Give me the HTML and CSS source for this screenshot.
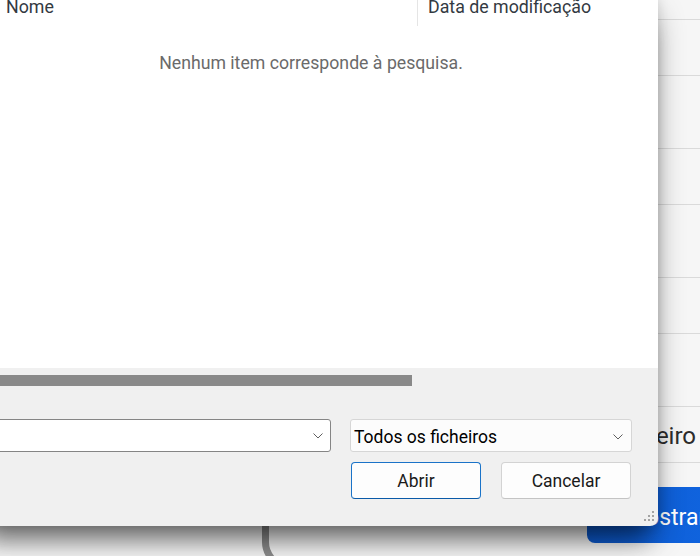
FILE: index.html
```html
<!DOCTYPE html>
<html lang="pt">
<head>
<meta charset="utf-8">
<title>Abrir</title>
<link rel="stylesheet" href="styles.css">
</head>
<body>
<div class="page">
  <div class="form">
    <div class="field"></div>
    <div class="field"></div>
    <div class="field"></div>
    <div class="field"><span class="field-text">Ficheiro</span></div>
    <button class="primary">Mostrar</button>
  </div>
  <svg class="wire" width="30" height="40" viewBox="0 0 30 40">
    <path d="M7.5 0 L7.5 22 Q7.5 32 15 40" fill="none" stroke="#8c8c8c" stroke-width="7"/>
  </svg>
</div>

<div class="dialog">
  <div class="list">
    <div class="list-header">
      <div class="col col-name">Nome</div>
      <div class="col col-date">Data de modificação</div>
    </div>
    <div class="empty">Nenhum item corresponde à pesquisa.</div>
  </div>
  <div class="footer">
    <div class="hscroll"></div>
    <div class="controls">
      <div class="combo">
        <svg class="chev" width="10" height="6" viewBox="0 0 10 6"><path d="M0.5 0.5 L5 5 L9.5 0.5" fill="none" stroke="#5f5f5f" stroke-width="1"/></svg>
      </div>
      <div class="select">
        <span>Todos os ficheiros</span>
        <svg class="chev" width="10" height="6" viewBox="0 0 10 6"><path d="M0.5 0.5 L5 5 L9.5 0.5" fill="none" stroke="#5f5f5f" stroke-width="1"/></svg>
      </div>
    </div>
    <div class="buttons">
      <button class="btn btn-default">Abrir</button>
      <button class="btn">Cancelar</button>
    </div>
  </div>
  <svg class="grip" width="12" height="12" viewBox="0 0 12 12">
    <rect x="9" y="1" width="2" height="2" fill="#a3a3a3"/>
    <rect x="5" y="5" width="2" height="2" fill="#a3a3a3"/>
    <rect x="9" y="5" width="2" height="2" fill="#a3a3a3"/>
    <rect x="1" y="9" width="2" height="2" fill="#a3a3a3"/>
    <rect x="5" y="9" width="2" height="2" fill="#a3a3a3"/>
    <rect x="9" y="9" width="2" height="2" fill="#a3a3a3"/>
  </svg>
</div>
</body>
</html>
```

FILE: styles.css
```css
html, body {
  margin: 0;
  padding: 0;
  overflow: hidden;
}

body {
  width: 700px;
  height: 556px;
  position: relative;
  font-family: Roboto, "Noto Sans", sans-serif;
}

/* background page */
.page {
  width: 700px;
  height: 556px;
  overflow: hidden;
  background: #f6f6f6;
  position: relative;
}

.form {
  margin-left: 587px;
  width: 300px;
  padding-top: 19px;
  display: flex;
  flex-direction: column;
}

.field {
  box-sizing: border-box;
  height: 57px;
  border-top: 1px solid #dadada;
  border-bottom: 1px solid #dadada;
  margin-bottom: 72px;
  display: flex;
  align-items: center;
  padding-left: 24px;
  padding-top: 2px;
}

.field:nth-child(4) {
  margin-bottom: 24px;
}

.field-text {
  font-size: 24px;
  color: #2c2c2c;
}

.primary {
  box-sizing: border-box;
  height: 56px;
  width: 300px;
  border: none;
  border-radius: 8px;
  background: linear-gradient(90deg, #0d5bd1, #1470f2);
  color: #fff;
  font-family: Roboto, "Noto Sans", sans-serif;
  font-size: 23px;
  text-align: left;
  padding: 4px 0 0 39px;
}

.wire {
  position: absolute;
  left: 258px;
  top: 520px;
}

/* dialog window */
.dialog {
  position: absolute;
  left: -24px;
  top: -3px;
  width: 682px;
  height: 529px;
  background: #f0f0f0;
  border-radius: 0 0 8px 0;
  box-shadow: 0 14px 30px -4px rgba(0, 0, 0, 0.42),
              0 26px 22px -12px rgba(0, 0, 0, 0.3),
              0 0 12px rgba(0, 0, 0, 0.12);
  display: flex;
  flex-direction: column;
  font-size: 17.5px;
  line-height: 20px;
}

.list {
  height: 371px;
  background: #fff;
  display: flex;
  flex-direction: column;
}

.list-header {
  display: flex;
  height: 29px;
  color: #333a42;
  font-size: 17.8px;
}

.col-name {
  width: 442px;
  padding-left: 30px;
  box-sizing: border-box;
  border-right: 1px solid #e5e5e5;
}

.col-date {
  padding-left: 10px;
}

.empty {
  margin-top: 27px;
  margin-right: 12px;
  text-align: center;
  color: #6a6a6a;
  font-size: 17.7px;
}

.footer {
  flex: 1;
  padding: 7px 26px 0 14px;
  display: flex;
  flex-direction: column;
}

.hscroll {
  margin-left: -4px;
  width: 426px;
  height: 11px;
  background: #898989;
}

.controls {
  margin-top: 33px;
  display: flex;
  gap: 19px;
  height: 33px;
}

.combo, .select {
  box-sizing: border-box;
  height: 33px;
  display: flex;
  align-items: center;
  justify-content: space-between;
  border-radius: 3px;
}

.combo {
  width: 341px;
  background: #fff;
  border: 1px solid #858585;
  padding-right: 7px;
  justify-content: flex-end;
}

.select {
  flex: 1;
  background: #fcfcfc;
  border: 1px solid #d6d6d6;
  padding: 2px 8px 0 3px;
  color: #000;
}

.chev {
  display: block;
}

.buttons {
  margin-top: 10px;
  margin-right: 1px;
  display: flex;
  justify-content: flex-end;
  gap: 20px;
}

.btn {
  box-sizing: border-box;
  width: 130px;
  height: 37px;
  background: #fdfdfd;
  border: 1px solid #d3d3d3;
  border-bottom-color: #c4c4c4;
  border-radius: 4px;
  font-family: Roboto, "Noto Sans", sans-serif;
  font-size: 17.5px;
  line-height: 20px;
  color: #1a1a1a;
  padding: 0;
}

.btn-default {
  border: 1px solid #1a73c8;
  border-bottom-color: #0a5aa8;
}

.grip {
  position: absolute;
  right: 3px;
  bottom: 4px;
}
```
